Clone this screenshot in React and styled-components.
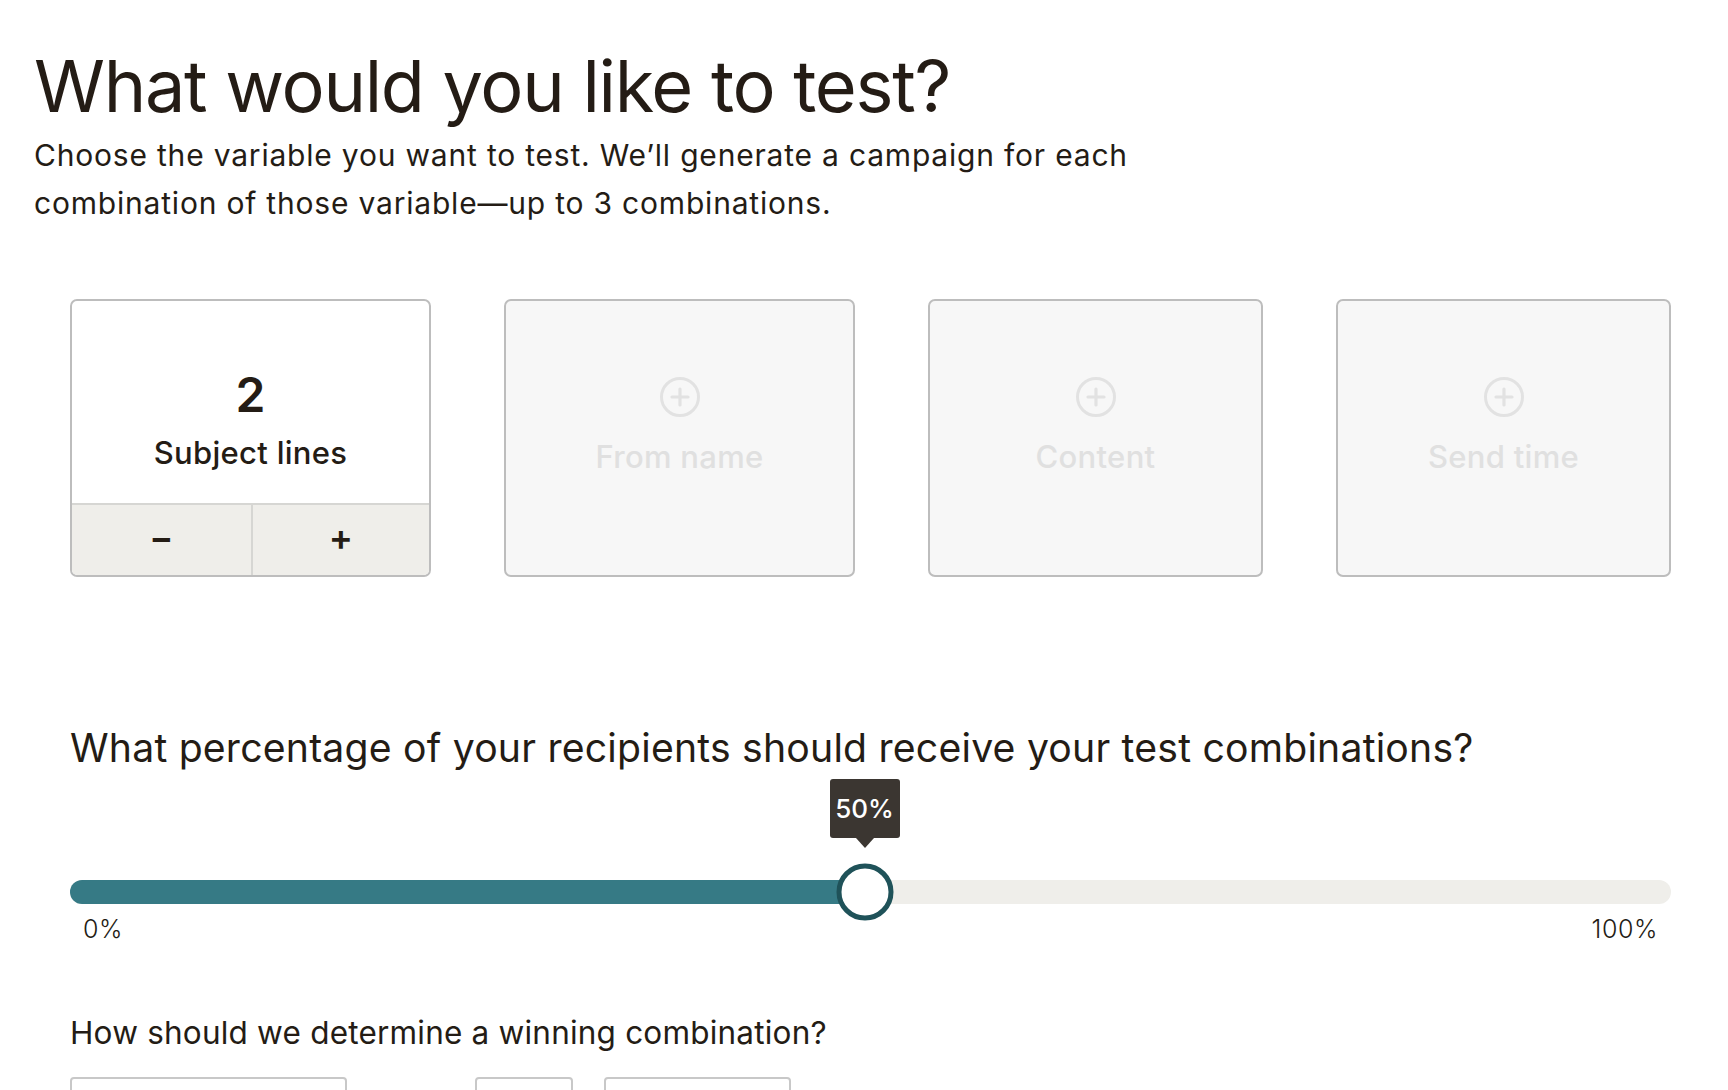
import React from "react";
import styled, { createGlobalStyle } from "styled-components";

const GlobalStyle = createGlobalStyle`
  html, body {
    margin: 0;
    padding: 0;
    background: #ffffff;
    overflow: hidden;
  }
  body {
    font-family: Inter, "Liberation Sans", sans-serif;
    color: #241c15;
  }
  * { box-sizing: border-box; }
`;

const Page = styled.main`
  padding: 46px 0 0 34px;
  width: 1728px;
`;

const Title = styled.h1`
  margin: 0;
  font-size: 72px;
  line-height: 80px;
  font-weight: 400;
  letter-spacing: -1.3px;
  color: #241c15;
`;

const Intro = styled.p`
  margin: 5px 0 0;
  max-width: 1160px;
  font-size: 30px;
  line-height: 48px;
  font-weight: 400;
  letter-spacing: 0.8px;
  color: #241c15;
`;

const Section = styled.section`
  padding-left: 36px;
`;

const CardRow = styled.div`
  display: flex;
  gap: 73px;
  margin-top: 72px;
`;

const Card = styled.div`
  width: ${(p) => p.$w}px;
  height: 278px;
  border: 2px solid #bdbdbd;
  border-radius: 7px;
  background: ${(p) => (p.$empty ? "#f7f7f7" : "#ffffff")};
  display: flex;
  flex-direction: column;
  overflow: hidden;
`;

const CardBody = styled.div`
  flex: 1;
  display: flex;
  flex-direction: column;
  align-items: center;
  padding-top: ${(p) => p.$top}px;
`;

const Count = styled.div`
  font-size: 48px;
  line-height: 56px;
  font-weight: 600;
`;

const CardLabel = styled.div`
  margin-top: ${(p) => p.$gap}px;
  font-size: 31px;
  line-height: 36px;
  font-weight: 500;
  letter-spacing: 0.3px;
  color: ${(p) => (p.$muted ? "#e0e0e0" : "#241c15")};
`;

const Stepper = styled.div`
  display: grid;
  grid-template-columns: 1fr 1fr;
  height: 72px;
  border-top: 2px solid #d6d6d3;
  background: #efeeea;
`;

const StepButton = styled.button`
  border: none;
  background: transparent;
  font-family: inherit;
  font-size: 36px;
  font-weight: 600;
  color: #241c15;
  display: flex;
  align-items: center;
  justify-content: center;
  padding: 0 0 6px;
  & + & {
    border-left: 2px solid #d6d6d3;
  }
`;

const Question = styled.h2`
  margin: ${(p) => p.$mt}px 0 0;
  font-size: ${(p) => p.$size}px;
  line-height: ${(p) => p.$lh}px;
  font-weight: 400;
  letter-spacing: 0.2px;
  color: #241c15;
`;

const SliderWrap = styled.div`
  position: relative;
  margin-top: 106px;
  width: 1601px;
  height: 24px;
  border-radius: 12px;
  background: #efeeea;
`;

const Fill = styled.div`
  height: 100%;
  border-radius: 12px 0 0 12px;
  background: #367a85;
`;

const Thumb = styled.div`
  position: absolute;
  top: 50%;
  width: 57px;
  height: 57px;
  border-radius: 50%;
  border: 5px solid #1f5259;
  background: #ffffff;
  transform: translate(-50%, -50%);
`;

const Bubble = styled.div`
  position: absolute;
  bottom: 66px;
  transform: translateX(-50%);
  background: #3b3631;
  color: #ffffff;
  border-radius: 3px;
  width: 70px;
  height: 59px;
  display: flex;
  align-items: center;
  justify-content: center;
  font-size: 26px;
  font-weight: 500;
  &::after {
    content: "";
    position: absolute;
    left: 50%;
    top: 100%;
    transform: translateX(-50%);
    border-left: 9px solid transparent;
    border-right: 9px solid transparent;
    border-top: 10px solid #3b3631;
  }
`;

const Scale = styled.div`
  width: 1601px;
  display: flex;
  justify-content: space-between;
  padding: 0 13px 0 13px;
  margin-top: 10px;
  font-size: 25px;
  line-height: 30px;
  font-weight: 300;
  letter-spacing: 0.6px;
  color: #241c15;
`;

const FieldRow = styled.div`
  display: flex;
  margin-top: 24px;
`;

const Field = styled.div`
  width: ${(p) => p.$w}px;
  height: 56px;
  margin-left: ${(p) => p.$ml}px;
  border: 2px solid #c8c8c8;
  border-radius: 4px;
  background: #ffffff;
`;

const PlusCircle = () => (
  <svg width="42" height="42" viewBox="0 0 42 42" fill="none">
    <circle cx="21" cy="21" r="18.5" stroke="#e2e2e2" strokeWidth="3" />
    <path d="M21 13v16M13 21h16" stroke="#e2e2e2" strokeWidth="3.2" strokeLinecap="round" />
  </svg>
);

const EmptyCard = ({ w, label }) => (
  <Card $w={w} $empty>
    <CardBody $top={75}>
      <PlusCircle />
      <CardLabel $gap={21} $muted>
        {label}
      </CardLabel>
    </CardBody>
  </Card>
);

export default function App() {
  const pct = 50;
  const thumbLeft = `calc(${pct}% - 6px)`;
  return (
    <>
      <GlobalStyle />
      <Page>
        <Title>What would you like to test?</Title>
        <Intro>
          Choose the variable you want to test. We’ll generate a campaign for each
          combination of those variable—up to 3 combinations.
        </Intro>
        <Section>
          <CardRow>
            <Card $w={361}>
              <CardBody $top={66}>
                <Count>2</Count>
                <CardLabel $gap={12}>Subject lines</CardLabel>
              </CardBody>
              <Stepper>
                <StepButton aria-label="decrease">−</StepButton>
                <StepButton aria-label="increase">+</StepButton>
              </Stepper>
            </Card>
            <EmptyCard w={351} label="From name" />
            <EmptyCard w={335} label="Content" />
            <EmptyCard w={335} label="Send time" />
          </CardRow>

          <Question $mt={145} $size={39.2} $lh={52}>
            What percentage of your recipients should receive your test combinations?
          </Question>

          <SliderWrap>
            <Fill style={{ width: thumbLeft }} />
            <Bubble style={{ left: thumbLeft }}>{pct}%</Bubble>
            <Thumb style={{ left: thumbLeft }} />
          </SliderWrap>
          <Scale>
            <span>0%</span>
            <span>100%</span>
          </Scale>

          <Question $mt={69} $size={31.5} $lh={40}>
            How should we determine a winning combination?
          </Question>

          <FieldRow>
            <Field $w={277} $ml={0} />
            <Field $w={98} $ml={128} />
            <Field $w={187} $ml={31} />
          </FieldRow>
        </Section>
      </Page>
    </>
  );
}
